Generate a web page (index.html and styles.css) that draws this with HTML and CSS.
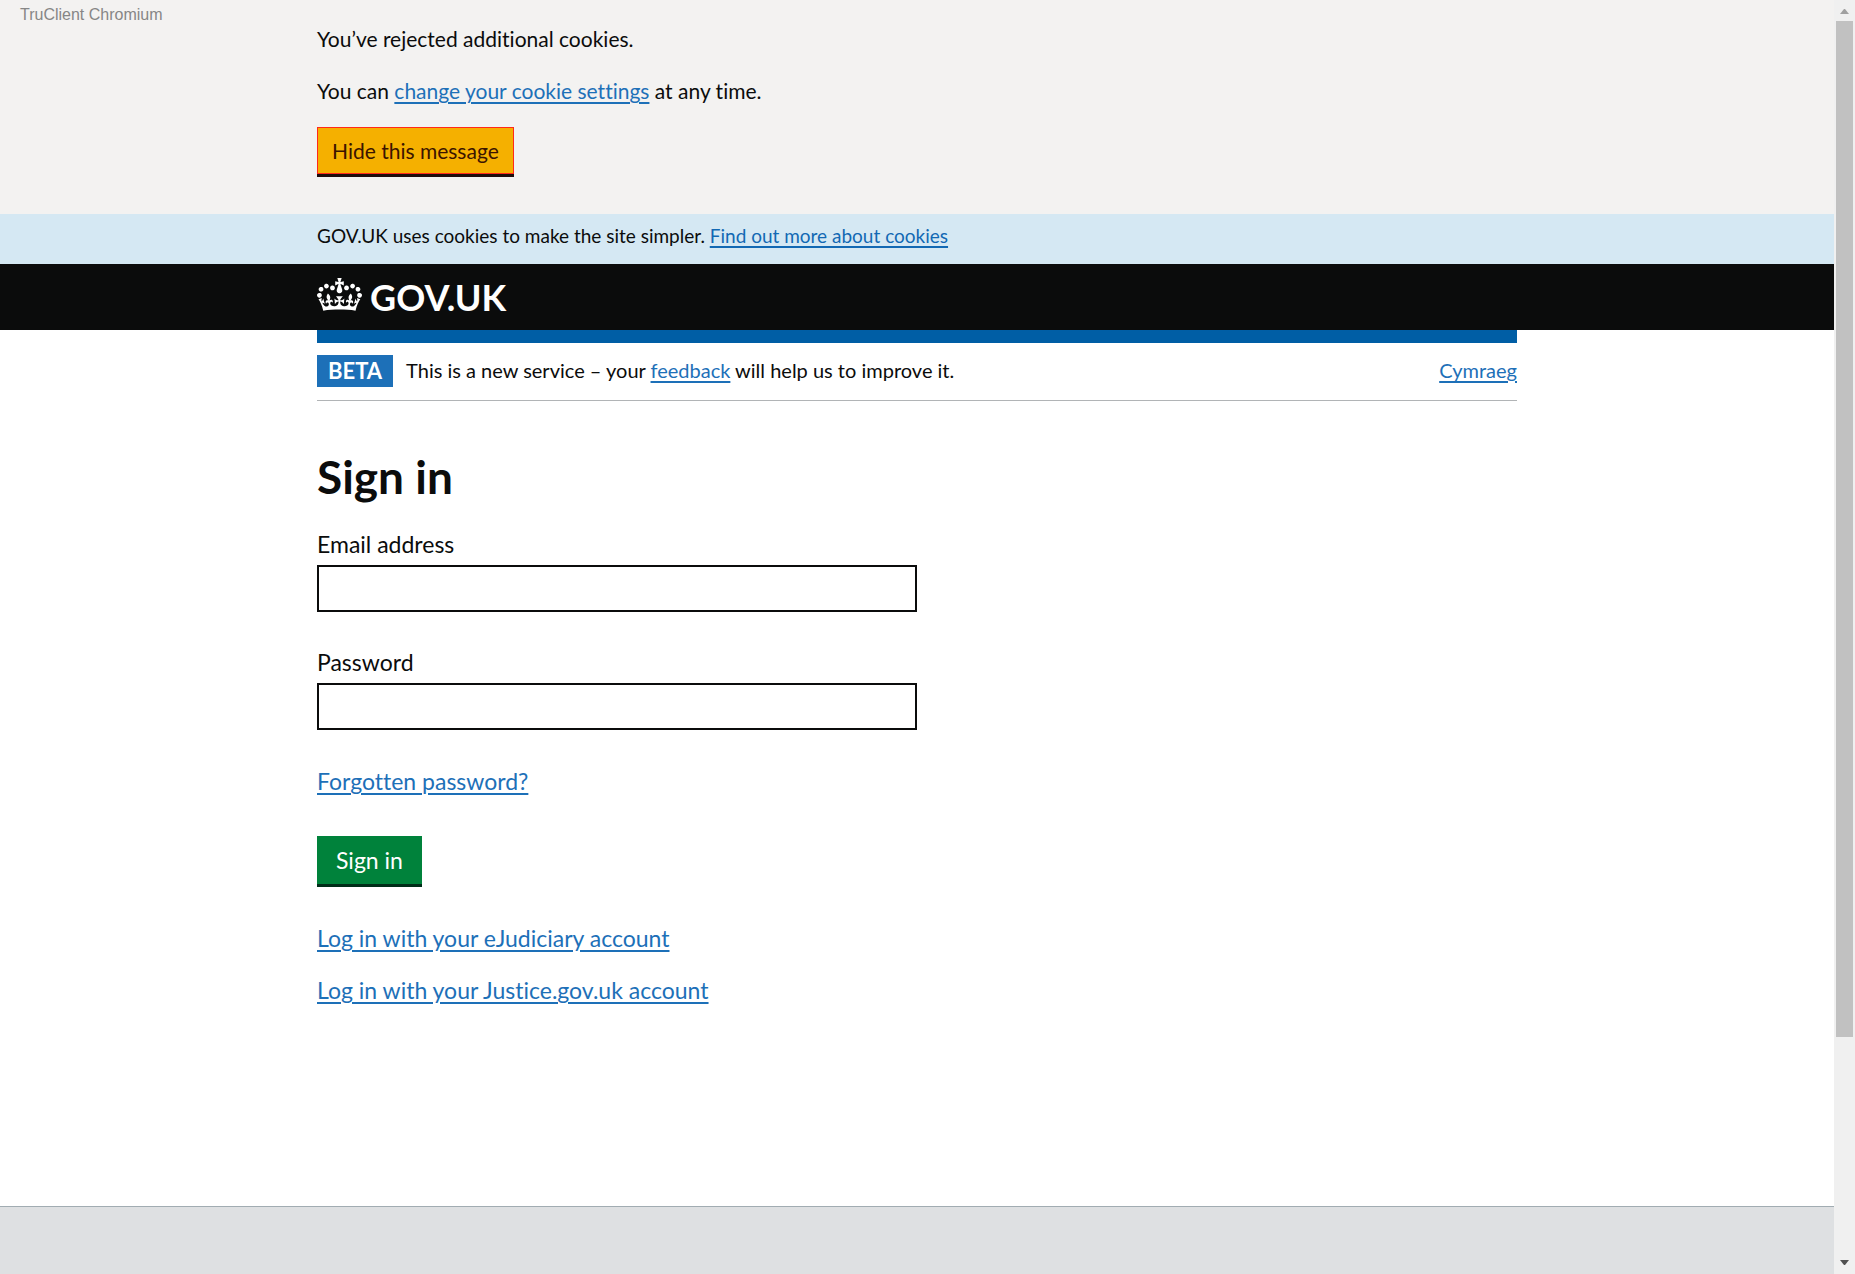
FILE: index.html
```html
<!DOCTYPE html>
<html lang="en">
<head>
<meta charset="utf-8">
<meta name="viewport" content="width=device-width, initial-scale=1">
<title>Sign in - GOV.UK</title>
<link rel="stylesheet" href="styles.css">
</head>
<body>
<div class="window-label">TruClient Chromium</div>

<section class="cookie-banner" aria-label="Cookies">
  <div class="container">
    <p class="cookie-text">You’ve rejected additional cookies.</p>
    <p class="cookie-text">You can <a href="#">change your cookie settings</a> at any time.</p>
    <button type="button" class="button button-hide">Hide this message</button>
  </div>
</section>

<div class="cookie-strip">
  <p class="container">GOV.UK uses cookies to make the site simpler. <a href="#">Find out more about cookies</a></p>
</div>

<header class="header">
  <div class="container header-inner">
    <svg class="crown" viewBox="0 0 132 97" aria-hidden="true"><path fill="currentColor" fill-rule="evenodd" d="M25 30.2c3.5 1.5 7.7-.2 9.1-3.7 1.5-3.6-.2-7.8-3.9-9.2-3.6-1.4-7.6.3-9.1 3.9-1.4 3.5.3 7.5 3.9 9zM9 39.5c3.6 1.5 7.8-.2 9.2-3.7 1.5-3.6-.2-7.8-3.9-9.1-3.6-1.5-7.6.2-9.1 3.8-1.4 3.5.3 7.5 3.8 9zM4.4 57.2c3.5 1.5 7.7-.2 9.1-3.8 1.5-3.6-.2-7.7-3.9-9.1-3.5-1.5-7.6.3-9.1 3.8-1.4 3.5.3 7.6 3.9 9.1zm38.3-21.4c3.5 1.5 7.7-.2 9.1-3.8 1.5-3.6-.2-7.7-3.9-9.1-3.6-1.5-7.6.3-9.1 3.8-1.3 3.6.4 7.7 3.9 9.1zm64.4-5.6c-3.6 1.5-7.8-.2-9.1-3.7-1.5-3.6.2-7.8 3.8-9.2 3.6-1.4 7.7.3 9.2 3.9 1.3 3.5-.4 7.5-3.9 9zm15.9 9.3c-3.6 1.5-7.7-.2-9.1-3.7-1.5-3.6.2-7.8 3.7-9.1 3.6-1.5 7.7.2 9.2 3.8 1.5 3.5-.3 7.5-3.8 9zm4.7 17.7c-3.6 1.5-7.8-.2-9.2-3.8-1.5-3.6.2-7.7 3.9-9.1 3.6-1.5 7.7.3 9.2 3.8 1.3 3.5-.4 7.6-3.9 9.1zM89.3 35.8c-3.6 1.5-7.8-.2-9.2-3.8-1.4-3.6.2-7.7 3.9-9.1 3.6-1.5 7.7.3 9.2 3.8 1.4 3.6-.3 7.7-3.9 9.1zM69.7 17.7l8.9 4.7V9.3l-8.9 2.8c-.2-.3-.5-.6-.9-.9L72.4 0H59.6l3.5 11.2c-.3.3-.6.5-.9.9l-8.8-2.8v13.1l8.8-4.7c.3.3.6.7.9.9l-5 15.4v.1c-.2.8-.4 1.6-.4 2.4 0 4.1 3.1 7.5 7 8.1h.2c.3 0 .7.1 1 .1.4 0 .7 0 1-.1h.2c4-.6 7.1-4.1 7.1-8.1 0-.8-.1-1.7-.4-2.4V34l-5.1-15.4c.4-.2.7-.6 1-.9zM66 92.8c16.9 0 32.8 1.1 47.1 3.2 4-16.9 8.9-26.7 14-33.5l-9.6-3.4c1 4.9 1.1 7.2 0 10.2-1.5-1.4-3-4.3-4.2-8.7L108.6 76c2.8-2 5-3.2 7.5-3.3-4.4 9.4-10 11.9-13.6 11.2-4.3-.8-6.3-4.6-5.6-7.9 1-4.7 5.7-5.9 8-.5 4.3-8.7-3-11.4-7.6-8.8 7.1-7.2 7.9-13.5 2.1-21.1-8 6.1-8.1 12.3-4.5 20.8-4.7-5.4-12.1-2.5-9.5 6.2 3.4-5.2 7.9-2 7.2 3.1-.6 4.3-6.4 7.8-13.5 7.2-10.3-.9-10.9-8-11.2-13.8 2.5-.5 7.1 1.8 11 7.3L80.2 60c-4.1 4.4-8 5.3-12.3 5.4 1.4-4.4 8-11.6 8-11.6H55.5s6.4 7.2 7.9 11.6c-4.2-.1-8-1-12.3-5.4l1.4 16.4c3.9-5.5 8.5-7.7 10.9-7.3-.3 5.8-.9 12.8-11.1 13.8-7.2.6-12.9-2.9-13.5-7.2-.7-5 3.8-8.3 7.1-3.1 2.7-8.7-4.6-11.6-9.4-6.2 3.7-8.5 3.6-14.7-4.6-20.8-5.8 7.6-5 13.9 2.2 21.1-4.7-2.6-11.9.1-7.7 8.8 2.3-5.5 7.1-4.2 8.1.5.7 3.3-1.3 7.1-5.7 7.9-3.5.7-9-1.8-13.5-11.2 2.5.1 4.7 1.3 7.5 3.3l-4.7-15.4c-1.2 4.4-2.7 7.2-4.3 8.7-1.1-3-.9-5.3 0-10.2l-9.5 3.4c5 6.9 9.9 16.7 14 33.5 14.8-2.1 30.8-3.2 47.7-3.2z"/></svg>
    <a href="#" class="site-name">GOV.UK</a>
  </div>
</header>

<div class="container">
  <div class="phase-banner">
    <strong class="phase-tag">BETA</strong>
    <p class="phase-text">This is a new service – your <a href="#">feedback</a> will help us to improve it.</p>
    <a href="#" class="language" lang="cy">Cymraeg</a>
  </div>

  <main class="main">
    <h1>Sign in</h1>
    <form class="form">
      <div class="field">
        <label for="username">Email address</label>
        <input type="email" id="username" name="username">
      </div>
      <div class="field">
        <label for="password">Password</label>
        <input type="password" id="password" name="password">
      </div>
      <a href="#" class="forgotten">Forgotten password?</a>
      <button type="submit" class="button button-submit">Sign in</button>
    </form>
    <div class="other-accounts">
      <a href="#">Log in with your eJudiciary account</a>
      <a href="#">Log in with your Justice.gov.uk account</a>
    </div>
  </main>
</div>

<footer class="footer"></footer>

<div class="scrollbar" aria-hidden="true">
  <svg class="arrow arrow-up" viewBox="0 0 9 5"><path fill="currentColor" d="M0 5 4 0h1l4 5z"/></svg>
  <div class="scroll-track"><div class="scroll-thumb"></div></div>
  <svg class="arrow" viewBox="0 0 9 5"><path fill="currentColor" d="M0 0h9L5 5H4z"/></svg>
</div>
</body>
</html>
```
FILE: styles.css
```css
* {
  box-sizing: border-box;
}

body {
  display: flex;
  flex-direction: column;
  min-height: 100vh;
  margin: 0;
  padding-right: 21px;
  background: #fff;
  color: #0b0c0c;
  font-family: Lato, "Liberation Sans", sans-serif;
  font-size: 23px;
  font-variant-ligatures: none;
  line-height: 30px;
}

p,
h1 {
  margin: 0;
}

a {
  color: #1d70b8;
  text-decoration-thickness: 2px;
  text-underline-offset: 3px;
}

.container {
  width: 100%;
  max-width: 1200px;
  margin: 0 auto;
}

.window-label {
  position: absolute;
  top: 6px;
  left: 20px;
  color: #868686;
  font: 16px/18px "Liberation Sans", sans-serif;
}

/* Cookie messages */
.cookie-banner {
  padding: 23px 0 40px;
  background: #f3f2f1;
}

.cookie-text {
  margin-bottom: 20px;
  font-size: 21px;
  line-height: 32px;
}

.button {
  display: block;
  border: 0;
  border-radius: 0;
  font-family: inherit;
  font-variant-ligatures: none;
  font-weight: 400;
}

.button-hide {
  padding: 9px 14px 8px;
  border: 1px solid #ff2a1a;
  background: #f5b000;
  box-shadow: 0 3px 0 #1c0d0d;
  color: #3b1400;
  font-size: 21px;
  line-height: 28px;
}

.cookie-strip {
  padding: 10px 0 16px;
  background: #d5e8f3;
  font-size: 19px;
  line-height: 24px;
}

.cookie-strip a {
  color: #1268b3;
}

/* Header */
.header {
  padding: 11px 0;
  background: #0b0c0c;
  color: #fff;
}

.header-inner {
  display: flex;
  align-items: baseline;
  gap: 8px;
}

.crown {
  width: 45px;
  height: 33px;
}

.site-name {
  color: inherit;
  font-size: 36px;
  font-weight: 700;
  line-height: 44px;
  text-decoration: none;
}

.phase-banner {
  display: flex;
  align-items: flex-start;
  padding: 12px 0 13px;
  border-top: 13px solid #005ea5;
  border-bottom: 1px solid #b1b4b6;
  font-size: 20px;
  line-height: 30px;
}

.phase-tag {
  margin-right: 13px;
  padding: 0 11px;
  background: #1d70b8;
  color: #fff;
  font-size: 22px;
  line-height: 32px;
}

.language {
  margin-left: auto;
}

/* Sign-in form */
.main {
  padding: 48px 0 201px;
}

h1 {
  margin-bottom: 24px;
  font-size: 46px;
  font-weight: 700;
  line-height: 56px;
}

.form {
  display: flex;
  flex-direction: column;
  align-items: flex-start;
}

.field {
  display: flex;
  flex-direction: column;
  gap: 6px;
  width: 50%;
  margin-bottom: 35px;
}

.field label {
  align-self: flex-start;
}

.field input {
  width: 100%;
  height: 47px;
  padding: 6px;
  border: 2px solid #0b0c0c;
  border-radius: 0;
  font: inherit;
}

.forgotten {
  margin: 1px 0 40px;
}

.button-submit {
  padding: 9px 19px;
  background: #00823b;
  box-shadow: 0 3px 0 #002d18;
  color: #fff;
  font-size: 23px;
  line-height: 30px;
}

.other-accounts {
  display: flex;
  flex-direction: column;
  align-items: flex-start;
  gap: 22px;
  margin-top: 39px;
}

.footer {
  flex: 1;
  min-height: 60px;
  border-top: 1px solid #a1acb2;
  background: #dee0e2;
}

/* Window scrollbar */
.scrollbar {
  position: fixed;
  top: 0;
  right: 0;
  bottom: 0;
  display: flex;
  flex-direction: column;
  align-items: center;
  gap: 7px;
  width: 21px;
  padding: 9px 2px;
  background: #f0f0f0;
}

.arrow {
  width: 9px;
  height: 5px;
  color: #505050;
}

.arrow-up {
  color: #a0a0a0;
}

.scroll-track {
  flex: 1;
  width: 100%;
}

.scroll-thumb {
  height: 82.5%;
  background: #c1c1c1;
}
```
